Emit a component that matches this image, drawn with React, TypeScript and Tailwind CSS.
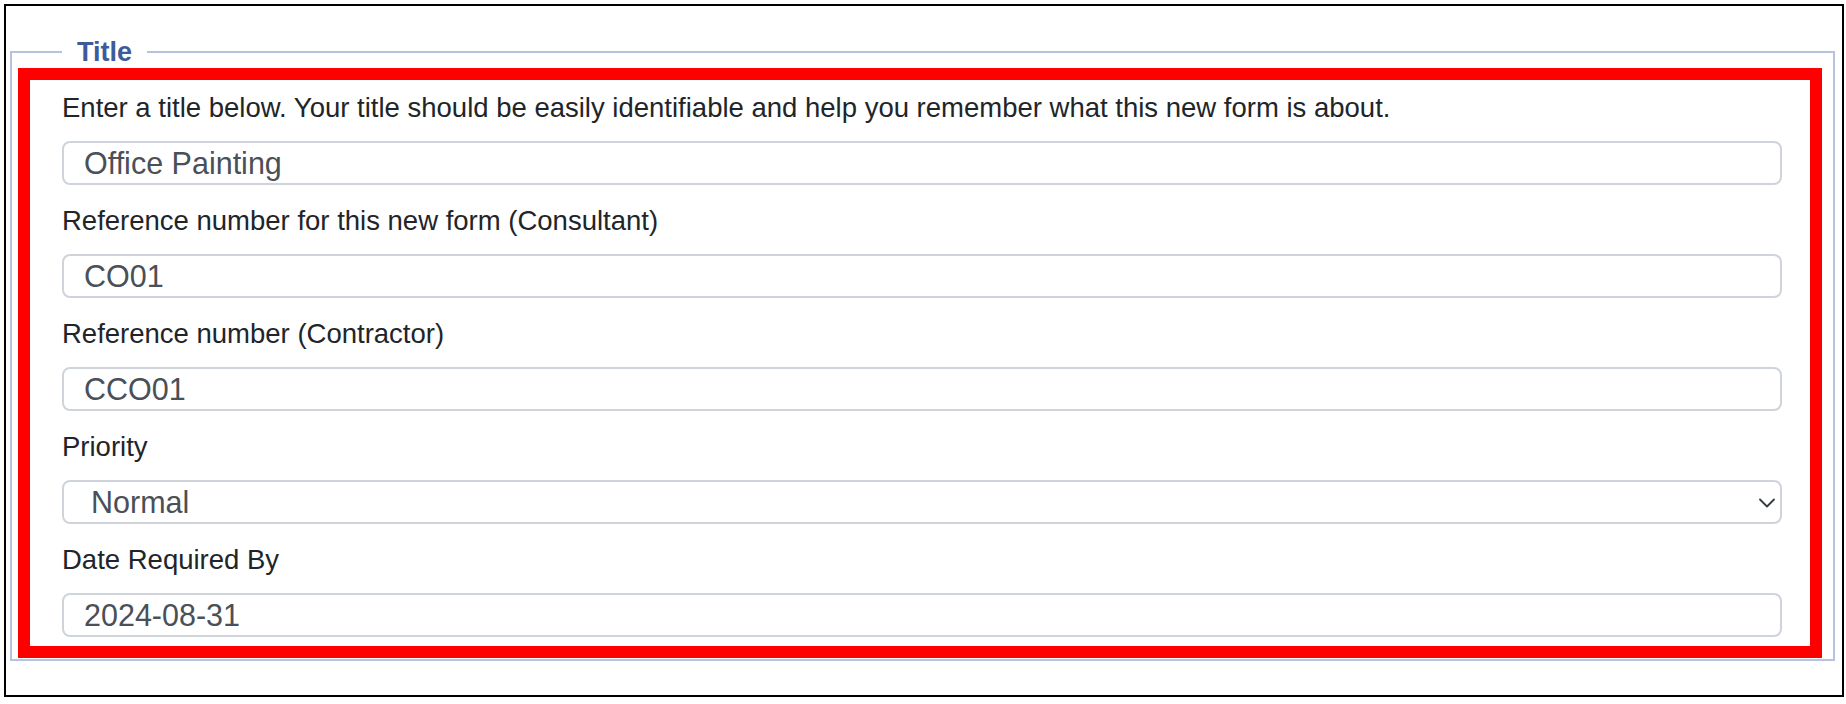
import React, { useState } from 'react';

interface FieldProps {
  label: string;
  children: React.ReactNode;
}

const Field: React.FC<FieldProps> = ({ label, children }) => (
  <div className="flex flex-col">
    <label className="h-[36px] text-[27.5px] leading-[36px] text-[#212529]">{label}</label>
    <div className="mt-[15px]">{children}</div>
  </div>
);

const inputClass =
  'block h-[44px] w-full rounded-[8px] border-2 border-[#ced4da] bg-white pl-[20px] pr-[16px] text-[30.5px] leading-[40px] text-[#495057] outline-none';

export default function App() {
  const [title, setTitle] = useState('Office Painting');
  const [refConsultant, setRefConsultant] = useState('CO01');
  const [refContractor, setRefContractor] = useState('CCO01');
  const [priority, setPriority] = useState('Normal');
  const [dateRequired, setDateRequired] = useState('2024-08-31');

  return (
    <div className="min-h-[704px] bg-white pt-[4px] pl-[4px] font-['Liberation_Sans',Arial,sans-serif]">
      <div className="flex h-[693px] w-[1840px] flex-col border-2 border-black">
        <fieldset className="mt-[31px] mr-[7px] ml-[4px] mb-[34px] border-2 border-[#b7c2e0]">
          <legend className="ml-[50px] px-[15px] text-[27px] leading-[30px] font-bold text-[#3d5a9b]">
            Title
          </legend>
          <div className="mt-[1px] mr-[11px] mb-[1px] ml-[6px] border-[12px] border-[#ff0000] pt-[10px] pr-[28px] pb-[9px] pl-[32px]">
            <div className="flex flex-col gap-[18px]">
              <Field label="Enter a title below. Your title should be easily identifiable and help you remember what this new form is about.">
                <input className={inputClass} value={title} onChange={(e) => setTitle(e.target.value)} />
              </Field>
              <Field label="Reference number for this new form (Consultant)">
                <input
                  className={inputClass}
                  value={refConsultant}
                  onChange={(e) => setRefConsultant(e.target.value)}
                />
              </Field>
              <Field label="Reference number (Contractor)">
                <input
                  className={inputClass}
                  value={refContractor}
                  onChange={(e) => setRefContractor(e.target.value)}
                />
              </Field>
              <Field label="Priority">
                <div className="relative">
                  <select
                    className="block h-[44px] w-full appearance-none rounded-[8px] border-2 border-[#ced4da] bg-white pl-[27px] pr-[40px] text-[30.5px] leading-[40px] text-[#495057] outline-none"
                    value={priority}
                    onChange={(e) => setPriority(e.target.value)}
                  >
                    <option>Low</option>
                    <option>Normal</option>
                    <option>High</option>
                    <option>Urgent</option>
                  </select>
                  <svg
                    className="pointer-events-none absolute top-[18px] right-[7px]"
                    width="16"
                    height="10"
                    viewBox="0 0 16 10"
                    fill="none"
                  >
                    <path d="M1 1.5l7 7 7-7" stroke="#343a40" strokeWidth="1.8" strokeLinecap="round" strokeLinejoin="round" />
                  </svg>
                </div>
              </Field>
              <Field label="Date Required By">
                <input
                  className={inputClass}
                  value={dateRequired}
                  onChange={(e) => setDateRequired(e.target.value)}
                />
              </Field>
            </div>
          </div>
        </fieldset>
      </div>
    </div>
  );
}
